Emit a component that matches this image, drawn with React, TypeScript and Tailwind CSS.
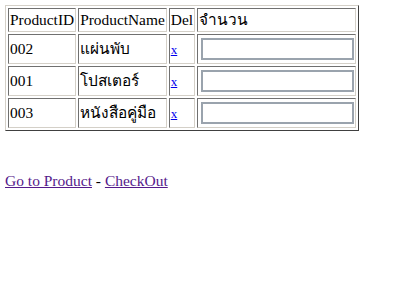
const items = [
  { id: "002", name: "แผ่นพับ" },
  { id: "001", name: "โปสเตอร์" },
  { id: "003", name: "หนังสือคู่มือ" },
];

const cell =
  "border border-solid border-t-[#707070] border-l-[#707070] border-b-[#d4d0c8] border-r-[#d4d0c8] p-[1px] text-left align-middle";

export default function App() {
  return (
    <div
      className="min-h-[282px] bg-white p-[5px] text-[15.4px] leading-[18px] text-black"
      style={{ fontFamily: '"Liberation Serif", "Times New Roman", serif' }}
    >
      <table className="border-separate border-spacing-[2px] border border-solid border-t-[#d4d0c8] border-l-[#d4d0c8] border-b-[#404040] border-r-[#404040]">
        <thead>
          <tr className="h-[24px]">
            <th className={`${cell} font-normal`}>ProductID</th>
            <th className={`${cell} font-normal`}>ProductName</th>
            <th className={`${cell} font-normal`}>Del</th>
            <th className={`${cell} font-normal`}>จำนวน</th>
          </tr>
        </thead>
        <tbody>
          {items.map((item) => (
            <tr key={item.id} className="h-[30px]">
              <td className={cell}>{item.id}</td>
              <td className={cell}>{item.name}</td>
              <td className={cell}>
                <a href="#" className="text-[13px] text-[#0000ee] underline">
                  x
                </a>
              </td>
              <td className={`${cell} pl-[3px] pr-[1px]`}>
                <input
                  type="text"
                  className="block h-[22px] w-[153px] border-2 border-solid border-[#9aa3ad] bg-white"
                />
              </td>
            </tr>
          ))}
        </tbody>
      </table>
      <div className="mt-[41px] text-[15.5px]">
        <a href="#" className="text-[#551a8b] underline">
          Go to Product
        </a>{" "}
        -{" "}
        <a href="#" className="text-[#551a8b] underline">
          CheckOut
        </a>
      </div>
    </div>
  );
}
